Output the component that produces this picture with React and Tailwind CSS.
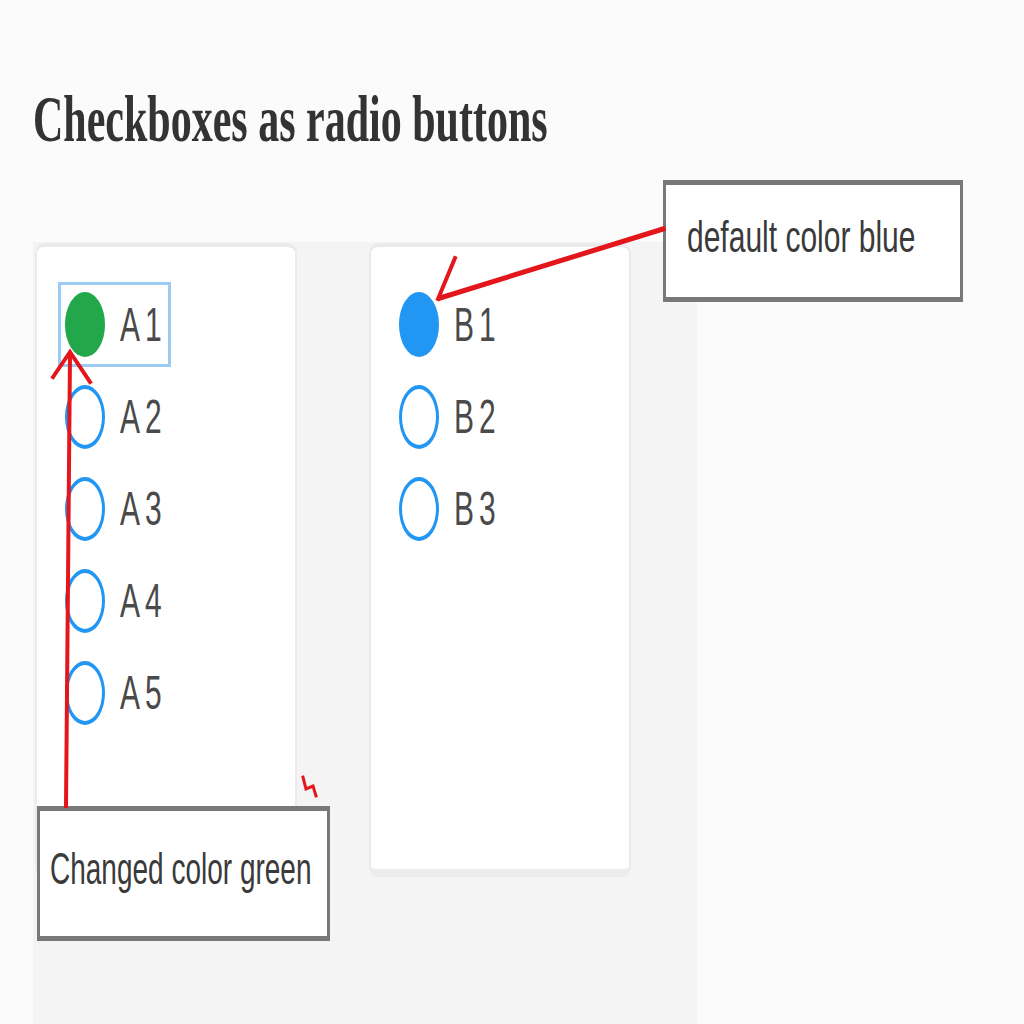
import React from 'react'

const groupA = [
  { id: 'A1', label: 'A1', checked: true, focused: true },
  { id: 'A2', label: 'A2' },
  { id: 'A3', label: 'A3' },
  { id: 'A4', label: 'A4' },
  { id: 'A5', label: 'A5' },
]

const groupB = [
  { id: 'B1', label: 'B1', checked: true },
  { id: 'B2', label: 'B2' },
  { id: 'B3', label: 'B3' },
]

// round "checkbox" that looks like a radio
const Dot = ({ checked, color }) => {
  if (checked) {
    return <span className={`block w-[40px] h-[65px] rounded-[50%] ${color}`} />
  }
  return <span className="block w-[40px] h-[64px] rounded-[50%] border-x-[3px] border-y-[4px] border-[#2196f3] bg-white" />
}

const Option = ({ item, color }) => (
  <label
    className={`flex w-fit items-center gap-[15px] border-[3px] pl-[4px] pr-[1px] py-[7px] ${
      item.focused ? 'border-[#9ccbf4]' : 'border-transparent'
    }`}
  >
    <Dot checked={item.checked} color={color} />
    <span className="inline-block scale-y-[1.6] text-[30px] leading-[30px] tracking-[5px] text-[#4a4a4a] font-['Liberation_Sans',Arial,sans-serif]">
      {item.label}
    </span>
  </label>
)

const Card = ({ items, color }) => (
  <div className="w-[262px] h-[634px] bg-white rounded-[10px] border-x-2 border-t-[4px] border-b-[8px] border-[#ebebeb] pl-[21px] pt-[35px]">
    <div className="flex flex-col gap-2">
      {items.map((item) => (
        <Option key={item.id} item={item} color={color} />
      ))}
    </div>
  </div>
)

export default function App() {
  return (
    <div className="relative w-[1024px] h-[1024px] overflow-hidden bg-[#fbfbfb] flex flex-col">
      <div className="h-[242px] shrink-0 pl-[33px] pt-[86px]">
        <h1 className="inline-block origin-top scale-y-[1.57] text-[42px] leading-[42px] font-bold text-[#333] font-['Liberation_Serif',Georgia,serif]">
          Checkboxes as radio buttons
        </h1>
      </div>

      <div className="ml-[33px] w-[664px] flex-1 bg-[#f4f4f4] pl-[2px] pt-[1px]">
        <div className="flex gap-[72px]">
          <Card items={groupA} color="bg-[#22a84a]" />
          <Card items={groupB} color="bg-[#2196f3]" />
        </div>
      </div>

      {/* annotation callouts */}
      <div className="absolute left-[663px] top-[180px] w-[300px] h-[122px] bg-white border-x-[3px] border-y-[5px] border-[#787878] pl-[21px] pt-[29px]">
        <span className="inline-block origin-top scale-y-[1.5] text-[30px] leading-[30px] text-[#3a3a3a] font-['Liberation_Sans',Arial,sans-serif]">
          default color blue
        </span>
      </div>

      <div className="absolute left-[37px] top-[806px] w-[293px] h-[135px] bg-white border-x-[3px] border-y-[5px] border-[#787878] pl-[10px] pt-[36px]">
        <span className="inline-block origin-top scale-y-[1.6] text-[28px] leading-[28px] text-[#3a3a3a] font-['Liberation_Sans',Arial,sans-serif] whitespace-nowrap">
          Changed color green
        </span>
      </div>

      <svg className="absolute inset-0 pointer-events-none" width="1024" height="1024" viewBox="0 0 1024 1024" fill="none">
        <g stroke="#e3161b" strokeLinecap="square" strokeLinejoin="miter">
          <path d="M663 229 L440 298" strokeWidth="5" />
          <path d="M455 258 L438 299" strokeWidth="4" />
          <path d="M66 806 L70 354" strokeWidth="4" />
          <path d="M53 377 L70 352 L90 382" strokeWidth="4" />
          <path d="M303 777 L306 789 L313 786 L316 796" strokeWidth="3" />
        </g>
      </svg>
    </div>
  )
}
